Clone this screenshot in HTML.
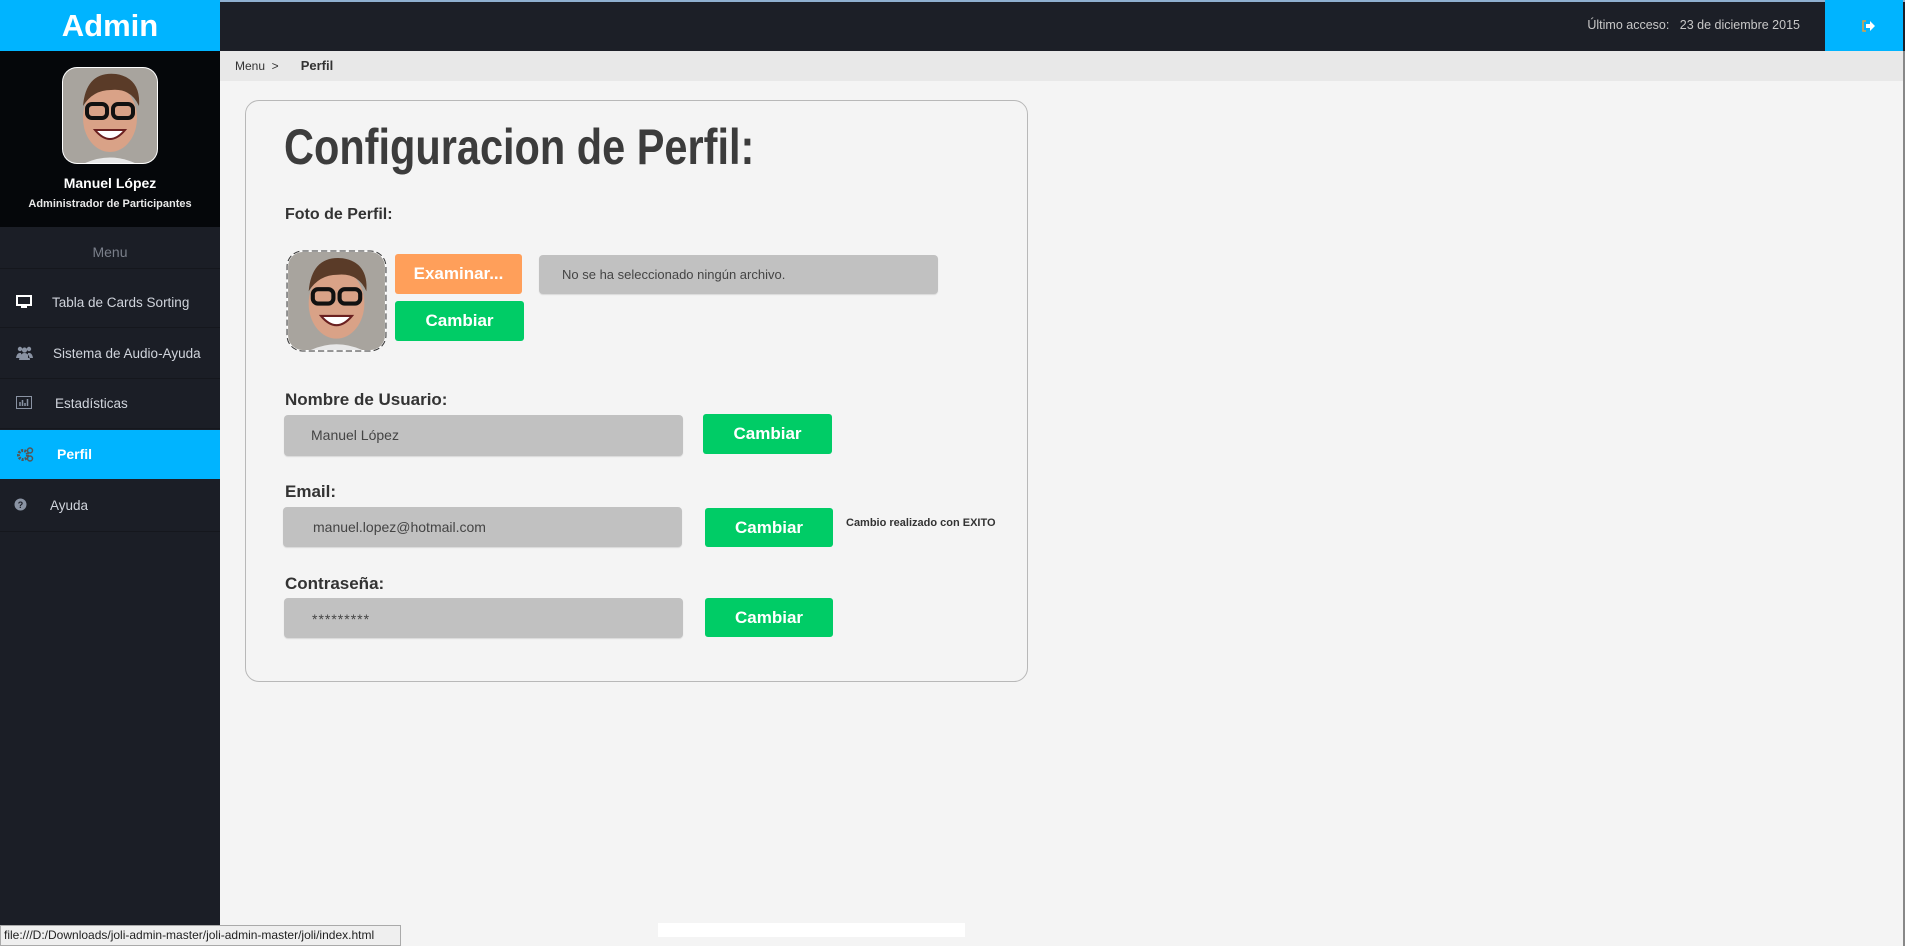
<!DOCTYPE html>
<html><head><meta charset="utf-8"><style>
*{margin:0;padding:0;box-sizing:border-box}
body{width:1905px;height:946px;overflow:hidden;background:#f4f4f4;font-family:"Liberation Sans",sans-serif;position:relative}
.abs{position:absolute}
.top{left:0;top:0;width:1905px;height:51px;background:#1c1f27;border-top:2px solid #8fb0d0}
.admin{left:0;top:0;width:220px;height:51px;background:#00b4ff;color:#fff;font-weight:bold;font-size:31px;text-align:center;line-height:51px}
.acc{right:105px;top:0;height:51px;line-height:51px;color:#c8c8c8;font-size:12.5px}
.out{left:1825px;top:0;width:78px;height:51px;background:#00b4ff}
.bc{left:220px;top:51px;width:1683px;height:30px;background:#e8e8e8;font-size:12px;color:#333;line-height:30px}
.side{left:0;top:51px;width:220px;height:895px;background:#1b1e26}
.prof{left:0;top:51px;width:220px;height:176px;background:#05070a}
.nm{left:0;width:220px;text-align:center;color:#fff;font-weight:bold}
.item{left:0;width:220px;height:50px;color:#d0d4dc;font-size:13.5px;border-bottom:1px solid #15171d}
.item span{position:absolute;top:0;line-height:50px}
.item svg{position:absolute;top:17px}
.card{left:245px;top:100px;width:783px;height:582px;border:1px solid #b8b8b8;border-radius:14px}
.lab{color:#333;font-weight:bold;font-size:17px}
.inp{background:#c1c1c1;border-radius:4px;color:#444;font-size:14px;box-shadow:0 1px 1px #d8d8d8}
.btn{background:#00cc66;border-radius:3px;color:#fff;font-weight:bold;font-size:17px;text-align:center}
</style></head><body>
<div class="abs top"></div>
<div class="abs admin">Admin</div>
<div class="abs acc">Último acceso: &nbsp; 23 de diciembre 2015</div>
<div class="abs out"><svg class="abs" style="left:37px;top:20px" width="14" height="12" viewBox="0 0 14 12"><path d="M4 1H1v10h3" fill="none" stroke="#e0a040" stroke-width="1.5"/><path d="M4 4h4V1l5 5-5 5V8H4z" fill="#fff"/></svg></div>
<div class="abs bc"><span style="margin-left:15px">Menu &nbsp;&gt;</span><span style="margin-left:22px;font-weight:bold;font-size:13px">Perfil</span></div>
<div class="abs" style="left:1903px;top:51px;width:2px;height:895px;background:#888"></div>

<div class="abs side"></div>
<div class="abs prof"></div>
<svg class="abs" style="left:61px;top:66px" width="98" height="99" viewBox="0 0 98 99"><defs><clipPath id="c1"><rect x="2" y="2" width="94" height="95" rx="14"/></clipPath></defs><rect x="1" y="1" width="96" height="97" rx="15" fill="#fff"/><g clip-path="url(#c1)"><rect width="98" height="99" fill="#a8a49e"/><ellipse cx="49" cy="52" rx="27" ry="34" fill="#d9a287"/><path d="M22 40 Q25 5 55 8 Q80 12 78 40 Q70 22 50 24 Q32 24 22 40Z" fill="#5a3b28"/><rect x="26" y="38" width="20" height="14" rx="5" fill="none" stroke="#111" stroke-width="4"/><rect x="52" y="38" width="20" height="14" rx="5" fill="none" stroke="#111" stroke-width="4"/><path d="M34 64 Q49 82 64 64Z" fill="#fff" stroke="#6a2020" stroke-width="2"/><path d="M20 99 Q49 84 78 99Z" fill="#e8e8e8"/></g></svg>
<div class="abs nm" style="top:175px;font-size:14px">Manuel López</div>
<div class="abs nm" style="top:198px;font-size:11px;color:#e8e8e8">Administrador de Participantes</div>
<div class="abs" style="left:0;top:227px;width:220px;height:42px;border-bottom:1px solid #15171d;color:#7a7f8a;text-align:center;line-height:50px;font-size:14px">Menu</div>

<div class="abs item" style="top:278px"><svg style="left:16px" width="16" height="14" viewBox="0 0 16 14"><rect x="1" y="1" width="14" height="9" fill="none" stroke="#fff" stroke-width="2"/><rect x="5" y="11" width="6" height="2" fill="#fff"/></svg><span style="left:52px">Tabla de Cards Sorting</span></div>
<div class="abs item" style="top:329px;height:50px"><svg style="left:16px" width="17" height="14" viewBox="0 0 17 14"><circle cx="4" cy="3" r="2.2" fill="#8a93a3"/><circle cx="13" cy="3" r="2.2" fill="#8a93a3"/><circle cx="8.5" cy="4" r="2.6" fill="#8a93a3"/><path d="M0 12Q1 6 5 7L5 12ZM17 12Q16 6 12 7L12 12ZM3 14Q4 7 8.5 7Q13 7 14 14Z" fill="#8a93a3"/></svg><span style="left:53px">Sistema de Audio-Ayuda</span></div>
<div class="abs item" style="top:379px"><svg style="left:16px" width="16" height="13" viewBox="0 0 16 13"><rect x="0.5" y="0.5" width="15" height="12" fill="none" stroke="#8a93a3"/><path d="M4 10V6M6.5 10V4M9 10V7M11.5 10V3" stroke="#8a93a3" stroke-width="1.5"/></svg><span style="left:55px">Estadísticas</span></div>
<div class="abs item" style="top:430px;height:49px;background:#00b4ff;color:#fff;font-weight:bold;border:none"><svg style="left:17px" width="17" height="15" viewBox="0 0 17 15"><circle cx="6" cy="8" r="4.5" fill="none" stroke="#555" stroke-width="3" stroke-dasharray="2 1.2"/><circle cx="13" cy="3.5" r="2.5" fill="none" stroke="#555" stroke-width="1.5"/><circle cx="13" cy="11.5" r="2.5" fill="none" stroke="#555" stroke-width="1.5"/></svg><span style="left:57px;font-size:14px;line-height:49px">Perfil</span></div>
<div class="abs item" style="top:479px;height:53px"><svg style="left:14px;top:19px" width="13" height="13" viewBox="0 0 13 13"><circle cx="6.5" cy="6.5" r="6" fill="#8a93a3"/><text x="6.5" y="10" font-size="9" font-weight="bold" text-anchor="middle" fill="#1b1e26" font-family="Liberation Sans">?</text></svg><span style="left:50px;line-height:53px">Ayuda</span></div>

<div class="abs card"></div>
<div class="abs" style="left:284px;top:118px;color:#3c3c3c;font-weight:bold;font-size:50px;transform:scaleX(0.83);transform-origin:left;white-space:nowrap">Configuracion de Perfil:</div>
<div class="abs lab" style="left:285px;top:206px;font-size:16px">Foto de Perfil:</div>
<svg class="abs" style="left:286px;top:250px" width="101" height="102" viewBox="0 0 98 99"><defs><clipPath id="c2"><rect x="2" y="2" width="94" height="95" rx="14"/></clipPath></defs><rect x="1" y="1" width="96" height="97" rx="15" fill="#fff" stroke="#333" stroke-width="1" stroke-dasharray="6 3"/><g clip-path="url(#c2)"><rect width="98" height="99" fill="#a8a49e"/><ellipse cx="49" cy="52" rx="27" ry="34" fill="#d9a287"/><path d="M22 40 Q25 5 55 8 Q80 12 78 40 Q70 22 50 24 Q32 24 22 40Z" fill="#5a3b28"/><rect x="26" y="38" width="20" height="14" rx="5" fill="none" stroke="#111" stroke-width="4"/><rect x="52" y="38" width="20" height="14" rx="5" fill="none" stroke="#111" stroke-width="4"/><path d="M34 64 Q49 82 64 64Z" fill="#fff" stroke="#6a2020" stroke-width="2"/><path d="M20 99 Q49 84 78 99Z" fill="#e8e8e8"/></g></svg>
<div class="abs btn" style="left:395px;top:254px;width:127px;height:40px;line-height:40px;background:#ff9f5a">Examinar...</div>
<div class="abs inp" style="left:539px;top:255px;width:399px;height:39px;line-height:39px;padding-left:23px;font-size:13px">No se ha seleccionado ningún archivo.</div>
<div class="abs btn" style="left:395px;top:301px;width:129px;height:40px;line-height:40px">Cambiar</div>

<div class="abs lab" style="left:285px;top:390px">Nombre de Usuario:</div>
<div class="abs inp" style="left:284px;top:415px;width:399px;height:41px;line-height:41px;padding-left:27px">Manuel López</div>
<div class="abs btn" style="left:703px;top:414px;width:129px;height:40px;line-height:40px">Cambiar</div>

<div class="abs lab" style="left:285px;top:482px">Email:</div>
<div class="abs inp" style="left:283px;top:507px;width:399px;height:40px;line-height:40px;padding-left:30px">manuel.lopez@hotmail.com</div>
<div class="abs btn" style="left:705px;top:508px;width:128px;height:39px;line-height:39px">Cambiar</div>
<div class="abs" style="left:846px;top:517px;font-size:11px;font-weight:bold;color:#333">Cambio realizado con EXITO</div>

<div class="abs lab" style="left:285px;top:574px">Contraseña:</div>
<div class="abs inp" style="left:284px;top:598px;width:399px;height:40px;line-height:42px;padding-left:28px;letter-spacing:1px">*********</div>
<div class="abs btn" style="left:705px;top:598px;width:128px;height:39px;line-height:39px">Cambiar</div>

<div class="abs" style="left:658px;top:923px;width:307px;height:14px;background:#fff"></div>
<div class="abs" style="left:0;top:925px;width:401px;height:21px;background:#efefef;border:1px solid #aaa;font-size:12px;line-height:19px;padding-left:3px;color:#222;white-space:nowrap;overflow:hidden">file:///D:/Downloads/joli-admin-master/joli-admin-master/joli/index.html</div>
</body></html>
